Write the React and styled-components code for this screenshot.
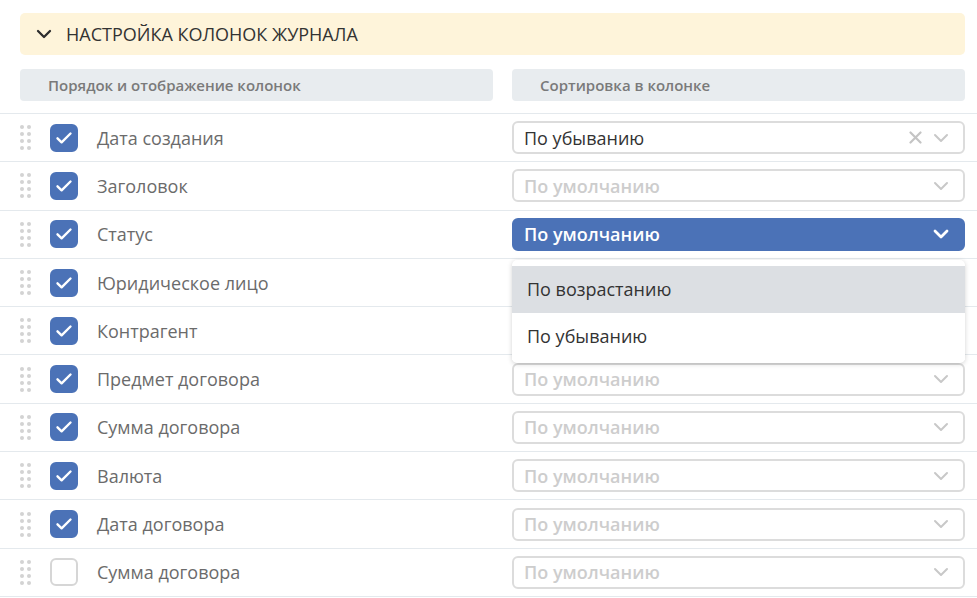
import React from 'react'
import styled, { createGlobalStyle } from 'styled-components'

const GlobalStyle = createGlobalStyle`
  html, body { margin: 0; padding: 0; background: #fff; }
  body { font-family: "Open Sans", "Noto Sans", sans-serif; }
  * { box-sizing: border-box; }
`

const columns = [
  { name: 'Дата создания', checked: true, sort: 'По убыванию', clear: true },
  { name: 'Заголовок', checked: true },
  { name: 'Статус', checked: true, open: true },
  { name: 'Юридическое лицо', checked: true },
  { name: 'Контрагент', checked: true },
  { name: 'Предмет договора', checked: true },
  { name: 'Сумма договора', checked: true },
  { name: 'Валюта', checked: true },
  { name: 'Дата договора', checked: true },
  { name: 'Сумма договора', checked: false },
]

function Chevron({ color = '#c4c4c4', width = 2 }) {
  return (
    <svg width="16" height="10" viewBox="0 0 16 10" fill="none">
      <path d="M2 2l6 6 6-6" stroke={color} strokeWidth={width} strokeLinecap="round" strokeLinejoin="round" />
    </svg>
  )
}

function Cross() {
  return (
    <svg width="13" height="13" viewBox="0 0 13 13" fill="none">
      <path d="M1.5 1.5l10 10M11.5 1.5l-10 10" stroke="#c4c4c4" strokeWidth="2.2" strokeLinecap="round" />
    </svg>
  )
}

function Handle() {
  return (
    <Dots>
      {Array.from({ length: 8 }).map((_, i) => <Dot key={i} />)}
    </Dots>
  )
}

function App() {
  return (
    <Page>
      <GlobalStyle />
      <Panel>
        <Chevron color="#2d2d2d" width={2.3} />
        <PanelTitle>Настройка колонок журнала</PanelTitle>
      </Panel>
      <Heads>
        <Head>Порядок и отображение колонок</Head>
        <Head>Сортировка в колонке</Head>
      </Heads>
      <List>
        {columns.map((c, i) => (
          <Row key={i}>
            <Left>
              <Handle />
              <Check $on={c.checked}>
                {c.checked && (
                  <svg width="20" height="20" viewBox="0 0 20 20" fill="none">
                    <path d="M3.5 10.3l4.1 4L16.5 5.5" stroke="#fff" strokeWidth="2.4" strokeLinecap="round" strokeLinejoin="round" />
                  </svg>
                )}
              </Check>
              <Label>{c.name}</Label>
            </Left>
            <SelectWrap>
              <Select $active={c.open}>
                <Value $placeholder={!c.sort} $active={c.open}>{c.sort || 'По умолчанию'}</Value>
                <Icons>
                  {c.clear && <Cross />}
                  <Chevron color={c.open ? '#fff' : '#c8c8c8'} width={c.open ? 2.8 : 2} />
                </Icons>
              </Select>
              {c.open && (
                <Menu>
                  <Option $hover>По возрастанию</Option>
                  <Option>По убыванию</Option>
                </Menu>
              )}
            </SelectWrap>
          </Row>
        ))}
      </List>
    </Page>
  )
}

export default App

const Page = styled.div`
  width: 977px;
  height: 598px;
  overflow: hidden;
  padding-top: 13px;
`

const Panel = styled.div`
  margin: 0 12px 0 20px;
  height: 42px;
  background: #fef4da;
  border-radius: 5px;
  display: flex;
  align-items: center;
  gap: 14px;
  padding-left: 16px;
`

const PanelTitle = styled.div`
  font-size: 18px;
  color: #333;
  text-transform: uppercase;
`

const Heads = styled.div`
  margin: 14px 12px 0 20px;
  display: grid;
  grid-template-columns: 473px 1fr;
  gap: 19px;
`

const Head = styled.div`
  height: 32px;
  background: #e8ecef;
  border-radius: 4px;
  display: flex;
  align-items: center;
  padding-left: 28px;
  font-size: 15px;
  font-weight: 600;
  color: #7a7a7a;
`

const List = styled.div`
  margin-top: 12px;
  border-top: 1px solid #e4e9ed;
`

const Row = styled.div`
  height: 48.3px;
  border-bottom: 1px solid #e4e9ed;
  display: grid;
  grid-template-columns: 512px 1fr;
  align-items: center;
  padding-right: 12px;
`

const Left = styled.div`
  display: flex;
  align-items: center;
  padding-left: 20px;
`

const Dots = styled.div`
  display: grid;
  grid-template-columns: 4px 4px;
  grid-auto-rows: 4px;
  column-gap: 3px;
  row-gap: 3px;
  margin-right: 19px;
`

const Dot = styled.span`
  width: 4px;
  height: 4px;
  border-radius: 50%;
  background: #d3d3d3;
`

const Check = styled.div`
  width: 28px;
  height: 28px;
  border-radius: 6px;
  display: flex;
  align-items: center;
  justify-content: center;
  background: ${p => (p.$on ? '#4b72b7' : '#fff')};
  border: 2px solid ${p => (p.$on ? '#4b72b7' : '#d6d6d6')};
  margin-right: 19px;
`

const Label = styled.div`
  font-size: 18px;
  color: #6b6b6b;
`

const SelectWrap = styled.div`
  position: relative;
`

const Select = styled.div`
  height: 33px;
  border-radius: 6px;
  border: 2px solid ${p => (p.$active ? '#4b72b7' : '#dcdcdc')};
  background: ${p => (p.$active ? '#4b72b7' : '#fff')};
  display: flex;
  align-items: center;
  justify-content: space-between;
  padding: 0 14px 0 10px;
`

const Value = styled.div`
  font-size: 18px;
  font-weight: ${p => (p.$placeholder ? 600 : 400)};
  color: ${p => (p.$active ? '#fff' : p.$placeholder ? '#cdcdcd' : '#333')};
`

const Icons = styled.div`
  display: flex;
  align-items: center;
  gap: 11px;
`

const Menu = styled.div`
  position: absolute;
  top: 42px;
  left: 0;
  right: 0;
  background: #fff;
  border-radius: 5px;
  box-shadow: 0 1px 5px rgba(0, 0, 0, 0.18);
  padding: 6px 0 3px;
  z-index: 2;
`

const Option = styled.div`
  height: 47px;
  display: flex;
  align-items: center;
  padding-left: 15px;
  font-size: 18px;
  color: #333;
  background: ${p => (p.$hover ? '#dcdfe3' : '#fff')};
`
